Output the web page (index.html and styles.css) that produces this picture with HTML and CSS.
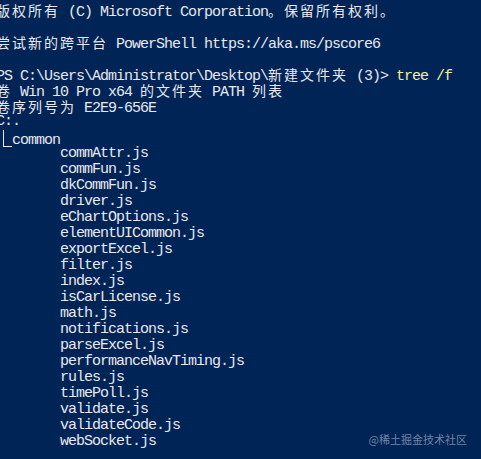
FILE: index.html
```html
<!DOCTYPE html>
<html>
<head>
<meta charset="utf-8">
<link rel="stylesheet" href="styles.css">
</head>
<body>
<div class="term">
<div class="ln"><span class="cjk">版权所有</span> (C) Microsoft Corporation<span class="cjk">。保留所有权利。</span></div>
<div class="ln"> </div>
<div class="ln"><span class="cjk">尝试新的跨平台</span> PowerShell https://aka.ms/pscore6</div>
<div class="ln"> </div>
<div class="ln">PS C:\Users\Administrator\Desktop\<span class="cjk">新建文件夹</span> (3)&gt; <span class="cmd">tree</span> <span class="cmd">/f</span></div>
<div class="ln"><span class="cjk">卷</span> Win 10 Pro x64 <span class="cjk">的文件夹</span> PATH <span class="cjk">列表</span></div>
<div class="ln"><span class="cjk">卷序列号为</span> E2E9-656E</div>
<div class="ln">C:.</div>
<div class="ln"><span class="corner"></span>common</div>
<div class="ln">        commAttr.js</div>
<div class="ln">        commFun.js</div>
<div class="ln">        dkCommFun.js</div>
<div class="ln">        driver.js</div>
<div class="ln">        eChartOptions.js</div>
<div class="ln">        elementUICommon.js</div>
<div class="ln">        exportExcel.js</div>
<div class="ln">        filter.js</div>
<div class="ln">        index.js</div>
<div class="ln">        isCarLicense.js</div>
<div class="ln">        math.js</div>
<div class="ln">        notifications.js</div>
<div class="ln">        parseExcel.js</div>
<div class="ln">        performanceNavTiming.js</div>
<div class="ln">        rules.js</div>
<div class="ln">        timePoll.js</div>
<div class="ln">        validate.js</div>
<div class="ln">        validateCode.js</div>
<div class="ln">        webSocket.js</div>
</div>
<div class="mark">@稀土掘金技术社区</div>
</body>
</html>
```
FILE: styles.css
```css
html, body {
  margin: 0;
  padding: 0;
  background: #012456;
  width: 481px;
  height: 459px;
  overflow: hidden;
}
body {
  position: relative;
}
.term {
  margin-left: -4px;
  padding-top: 2px;
  color: #e8e8ee;
  font-family: "Liberation Mono", monospace;
  font-size: 15px;
  letter-spacing: -1px;
}
.ln {
  height: 16px;
  line-height: 16px;
  white-space: pre;
}
.cjk {
  font-family: "Noto Sans CJK SC", sans-serif;
  font-size: 14px;
  line-height: 16px;
  letter-spacing: 2px;
}
.cmd {
  color: #f5eea0;
}
.corner {
  display: inline-block;
  width: 9px;
  height: 17px;
  margin-left: 7px;
  border-left: 1px solid #e8e8ee;
  border-bottom: 1px solid #e8e8ee;
  vertical-align: -3px;
  box-sizing: border-box;
}
.mark {
  position: absolute;
  right: 14px;
  bottom: 13px;
  color: #6f84a6;
  font-family: "Noto Sans CJK SC", sans-serif;
  font-size: 11px;
  line-height: 13px;
}
```
